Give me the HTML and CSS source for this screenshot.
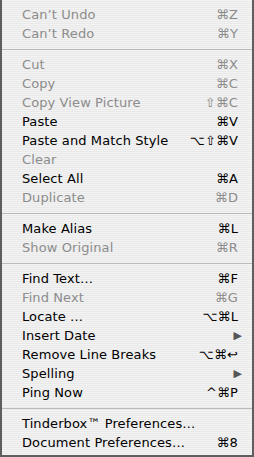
FILE: index.html
```html
<!DOCTYPE html>
<html lang="en">
<head>
  <meta charset="utf-8" />
  <title>Edit Menu</title>
  <link rel="stylesheet" href="styles.css">
</head>
<body>

<div class="menu">
  <div class="item off"><span class="label">Can’t Undo</span><span class="key">⌘Z</span></div>
  <div class="item off"><span class="label">Can’t Redo</span><span class="key">⌘Y</span></div>
  <div class="sep"></div>
  <div class="item off"><span class="label">Cut</span><span class="key">⌘X</span></div>
  <div class="item off"><span class="label">Copy</span><span class="key">⌘C</span></div>
  <div class="item off"><span class="label">Copy View Picture</span><span class="key">⇧⌘C</span></div>
  <div class="item"><span class="label">Paste</span><span class="key">⌘V</span></div>
  <div class="item"><span class="label">Paste and Match Style</span><span class="key">⌥⇧⌘V</span></div>
  <div class="item off"><span class="label">Clear</span></div>
  <div class="item"><span class="label">Select All</span><span class="key">⌘A</span></div>
  <div class="item off"><span class="label">Duplicate</span><span class="key">⌘D</span></div>
  <div class="sep"></div>
  <div class="item"><span class="label">Make Alias</span><span class="key">⌘L</span></div>
  <div class="item off"><span class="label">Show Original</span><span class="key">⌘R</span></div>
  <div class="sep"></div>
  <div class="item"><span class="label">Find Text…</span><span class="key">⌘F</span></div>
  <div class="item off"><span class="label">Find Next</span><span class="key">⌘G</span></div>
  <div class="item"><span class="label">Locate …</span><span class="key">⌥⌘L</span></div>
  <div class="item"><span class="label">Insert Date</span><span class="arrow">▶</span></div>
  <div class="item"><span class="label">Remove Line Breaks</span><span class="key">⌥⌘↩</span></div>
  <div class="item"><span class="label">Spelling</span><span class="arrow">▶</span></div>
  <div class="item"><span class="label">Ping Now</span><span class="key">^⌘P</span></div>
  <div class="sep"></div>
  <div class="item"><span class="label">Tinderbox™ Preferences…</span></div>
  <div class="item"><span class="label">Document Preferences…</span><span class="key">⌘8</span></div>
</div>

</body>
</html>
```

FILE: styles.css
```css
body {
  margin: 0;
  font-family: "DejaVu Sans", sans-serif;
  font-size: 13px;
}

.menu {
  box-sizing: border-box;
  width: 254px;
  height: 457px;
  padding: 5px 0 3px;
  border: 2px solid #5e5e5e;
  border-top: none;
  background: repeating-linear-gradient(#f3f3f3 0 1px, #e9e9e9 1px 2px);
}

.item {
  display: flex;
  align-items: center;
  height: 19px;
  padding: 0 14px 0 20px;
  color: #000;
  letter-spacing: 0.1px;
}

.item.off {
  color: #8c8c8c;
}

.label {
  flex: 1;
  white-space: nowrap;
}

.key {
  white-space: nowrap;
}

.arrow {
  font-size: 11px;
  color: #555;
  margin-right: -4px;
}

.sep {
  height: 12px;
  display: flex;
  align-items: center;
}

.sep::before {
  content: "";
  flex: 1;
  height: 1px;
  background: #b9b9b9;
}
```
